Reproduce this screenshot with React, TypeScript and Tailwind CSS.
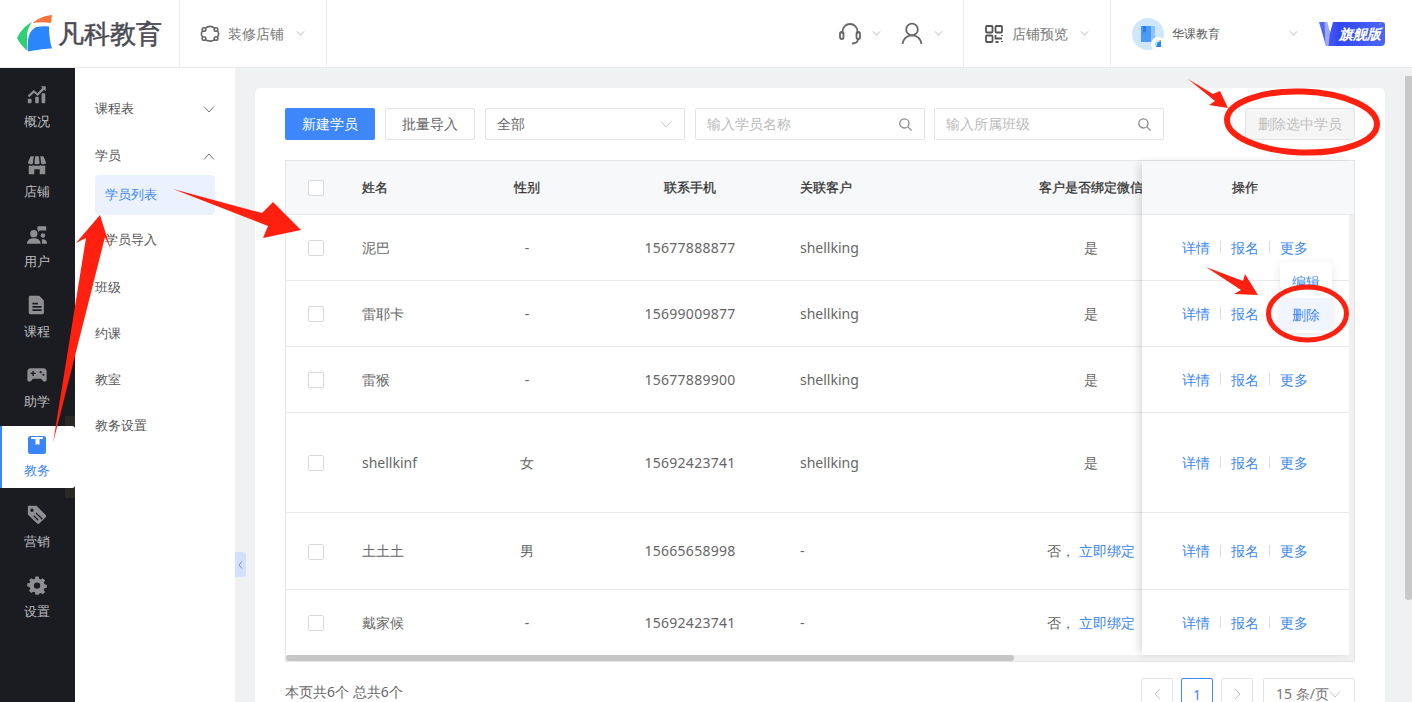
import React from "react";

const Chev = ({ className = "", up = false, small = false }: { className?: string; up?: boolean; small?: boolean }) => (
  <svg viewBox="0 0 12 7" className={`${small ? "h-[5px] w-[9px]" : "h-[7px] w-[12px]"} shrink-0 ${className}`} fill="none" stroke="currentColor" strokeWidth={small ? 1.3 : 1}>
    <path d={up ? "M1 6.5 6 1l5 5.5" : "M1 .5 6 6l5-5.5"} />
  </svg>
);

const Search = () => (
  <svg viewBox="0 0 16 16" className="h-[15px] w-[15px] text-[#8a8a8a]" fill="none" stroke="currentColor" strokeWidth="1.4">
    <circle cx="6.8" cy="6.8" r="4.9" />
    <path d="m10.5 10.5 4 4" />
  </svg>
);

const nav: { label: string; icon: React.ReactNode }[] = [
  {
    label: "概况",
    icon: (
      <>
        <rect x="2" y="16" width="4" height="5" rx="1" />
        <rect x="10" y="14" width="4" height="7" rx="1" />
        <rect x="17" y="10" width="4" height="11" rx="1" />
        <path d="M2 12.5 8.5 6.5l4 3.500 5.500-6-2-1.500h5.500V8l-1.700-1.800L12.700 13l-4-3.400L3.500 14.500z" />
      </>
    ),
  },
  {
    label: "店铺",
    icon: (
      <>
        <path d="M5 2.500h3.500L7.500 10c-.3 1.500-5 1.500-5.500-.5zM10 2.500h4l.8 7.500c-.3 1.500-5.300 1.500-5.600 0zM15.500 2.500H19l3 7c-.5 2-5.200 2-5.500.5z" />
        <path d="M3 12.500c1.500.5 3.500.5 4.700-.3 1.300 1 7.300 1 8.600 0 1.200.8 3.200.8 4.700.3V22h-6v-5.500H9V22H3z" />
      </>
    ),
  },
  {
    label: "用户",
    icon: (
      <>
        <circle cx="8.500" cy="10.500" r="4" />
        <path d="M1 21.500c0-4 3.500-6 7.500-6s7.500 2 7.500 6z" />
        <path d="M12.500 2.500h9.500V7h-7l-1.500 2V7h-1z" />
        <circle cx="18.500" cy="12.500" r="2.500" />
        <path d="M17.500 21.500H23c0-3-1.800-5-4.500-5l-1.500.5c.5 1.300.5 3 .5 4.500z" />
      </>
    ),
  },
  {
    label: "课程",
    icon: (
      <path
        fillRule="evenodd"
        d="M4.500 2h10l5 5v13.500A1.500 1.500 0 0 1 18 22H4.500A1.500 1.500 0 0 1 3 20.500v-17A1.500 1.500 0 0 1 4.500 2zM7 9.500v2h6v-2zm0 3.500v2h10v-2zm0 3.500v2h10v-2z"
      />
    ),
  },
  {
    label: "助学",
    icon: (
      <path
        fillRule="evenodd"
        d="M5 4.500h14c2 0 3.500 1.500 3.500 3.500v9c0 2.500-3 3-4.500 1l-1.500-2h-9L6 18c-1.500 2-4.500 1.500-4.500-1V8c0-2 1.500-3.500 3.500-3.500zM7 7.500v2H5V11h2v2h1.500v-2h2V9.500h-2v-2zm9 .2a1.200 1.200 0 1 0 0 2.400 1.200 1.200 0 0 0 0-2.400zm3 2.800a1.200 1.200 0 1 0 0 2.400 1.200 1.200 0 0 0 0-2.400z"
      />
    ),
  },
];

const nav2: { label: string; icon: React.ReactNode }[] = [
  {
    label: "营销",
    icon: (
      <path
        fillRule="evenodd"
        d="M3 2h8.500l10 10c.7.700.7 1.700 0 2.400l-7 7c-.7.700-1.700.7-2.400 0L2 11.500V3a1 1 0 0 1 1-1zm3.500 3a1.800 1.800 0 1 0 0 3.600 1.800 1.800 0 0 0 0-3.600zm4.800 4.200-1 1 7 7 1-1zm-2.500 3-1 1 5 5 1-1z"
      />
    ),
  },
  {
    label: "设置",
    icon: (
      <path
        fillRule="evenodd"
        d="M10 2h4l.6 3 2.100.9 2.600-1.700 2.800 2.800-1.700 2.600.9 2.100 3 .6v4l-3 .6-.9 2.100 1.700 2.600-2.800 2.800-2.600-1.700-2.100.9L14 25h-4l-.6-3-2.100-.9-2.600 1.700-2.800-2.800 1.700-2.600-.9-2.100-3-.6v-4l3-.6.9-2.100L1.900 7l2.800-2.800 2.600 1.700 2.100-.9zM12 9.500a4 4 0 1 0 0 8 4 4 0 0 0 0-8z"
        transform="translate(1.600 .9) scale(.87)"
      />
    ),
  },
];

const NavItem = ({ label, icon }: { label: string; icon: React.ReactNode }) => (
  <div className="flex h-[70px] flex-col items-center pr-px pt-[11px]">
    <svg viewBox="0 0 24 24" className="h-[22px] w-[22px] fill-[#8f8f91]">{icon}</svg>
    <div className="mt-[5px] text-[13px] leading-5 text-[#bdbdbf]">{label}</div>
  </div>
);

const subMenu = ["班级", "约课", "教室", "教务设置"];

const rows = [
  { h: "h-[66px]", name: "泥巴", g: "-", p: "15677888877", c: "shellking", b: true },
  { h: "h-[66px]", name: "雷耶卡", g: "-", p: "15699009877", c: "shellking", b: true, pop: true },
  { h: "h-[66px]", name: "雷猴", g: "-", p: "15677889900", c: "shellking", b: true },
  { h: "h-[100px]", name: "shellkinf", g: "女", p: "15692423741", c: "shellking", b: true },
  { h: "h-[77px]", name: "土土土", g: "男", p: "15665658998", c: "-", b: false },
  { h: "h-[65px]", name: "戴家候", g: "-", p: "15692423741", c: "-", b: false },
];

const Check = () => <span className="block h-4 w-4 rounded-[2px] border border-[#d9d9dd] bg-white" />;

const grid = "grid w-[896px] grid-cols-[62px_122px_114px_212px_204px_182px] items-center";
const headStrong = "text-[13px] font-medium text-[#333] [-webkit-text-stroke:0.3px_#333]";
const A = ({ children }: { children: React.ReactNode }) => <span className="text-[#3d87f5]">{children}</span>;

export default function App() {
  return (
    <div className="relative h-[702px] w-[1412px] overflow-hidden bg-[#f0f1f3] text-[14px] text-[#666] [font-family:'Noto_Sans_CJK_SC','Liberation_Sans',sans-serif]">
      {/* top bar */}
      <header className="flex h-[68px] items-center border-b border-[#ececee] bg-white">
        <div className="flex h-full w-[180px] items-center border-r border-[#ececee] pl-[17px]">
          <svg viewBox="0 0 36 37" className="h-[37px] w-9 shrink-0">
            <path d="M0 23C4 15 9 10 15 7c-4 6-5 10-5 15 0 5 0 10 .5 14C5 31 2 27 0 23z" fill="#2fcf73" />
            <path d="M16 8c4-4 10-7 19-8l-1 8c-7-1-12-1-18 0z" fill="#f9743a" />
            <path d="M19 12c5-1 9-1 13-.5 0 8 1 16 3 22-6 0-13 1-24 3-.5-5-.5-9 .5-14 1-4 3-8 7.500-10.500z" fill="#2b86fb" />
          </svg>
          <span className="ml-[5px] whitespace-nowrap text-[25.500px] font-medium leading-none text-[#4b4b54] [-webkit-text-stroke:0.5px_#4b4b54]">凡科教育</span>
        </div>
        <div className="flex h-full w-[147px] items-center border-r border-[#ececee] pl-5 text-[#777]">
          <svg viewBox="0 0 20 20" className="h-5 w-5 text-[#666]" fill="none" stroke="currentColor" strokeWidth="1.600">
            <path d="M5 4.500c3-2.500 7-2.500 10 0M17.500 7c1.500 2 1.500 4 0 6M15 15.500c-3 2-7 2-10 0M2.500 13c-1.500-2-1.500-4 0-6" />
            <circle cx="4" cy="5.500" r="1.800" />
            <circle cx="16" cy="5.500" r="1.800" />
            <circle cx="4" cy="14.500" r="1.800" />
            <circle cx="16" cy="14.500" r="1.800" />
          </svg>
          <span className="ml-2 whitespace-nowrap">装修店铺</span>
          <Chev small className="ml-3 text-[#b5b5b5]" />
        </div>
        <div className="flex-1" />
        <div className="flex h-full items-center border-r border-[#ececee] pr-[20px]">
          <svg viewBox="0 0 22 24" className="h-6 w-[22px] text-[#666]" fill="none" stroke="currentColor" strokeWidth="1.800">
            <path d="M3.500 12V9.500a7.500 7.500 0 0 1 15 0V12" />
            <rect x="1" y="10" width="3.500" height="7" rx="1.700" />
            <rect x="17.500" y="10" width="3.500" height="7" rx="1.700" />
            <path d="M19 17c0 3-2.500 4.500-6 4.500" />
          </svg>
          <Chev small className="ml-[11px] text-[#b5b5b5]" />
          <svg viewBox="0 0 22 24" className="ml-[20px] h-6 w-[22px] text-[#666]" fill="none" stroke="currentColor" strokeWidth="1.800">
            <circle cx="11" cy="7.500" r="5.800" />
            <path d="M1.500 22c.5-5 4.500-8.700 9.500-8.700s9 3.700 9.500 8.700" />
          </svg>
          <Chev small className="ml-[11px] text-[#b5b5b5]" />
        </div>
        <div className="flex h-full items-center border-r border-[#ececee] pl-[21px] pr-[21px] text-[#777]">
          <svg viewBox="0 0 18 18" className="h-[18px] w-[18px] text-[#555]" fill="none" stroke="currentColor" strokeWidth="1.800">
            <rect x="1" y="1" width="6.500" height="6.500" rx="1" />
            <rect x="10.500" y="1" width="6.500" height="6.500" rx="1" />
            <rect x="1" y="10.500" width="6.500" height="6.500" rx="1" />
            <path d="M10.500 10v3.500h6.500M10.500 17h3M17 10v1M17 16v1" />
          </svg>
          <span className="ml-[9px] whitespace-nowrap">店铺预览</span>
          <Chev small className="ml-3 text-[#b5b5b5]" />
        </div>
        <div className="flex h-full w-[301px] items-center pl-[21px]">
          <div className="relative flex h-8 w-8 shrink-0 items-center justify-center rounded-full bg-[#cfe6fb]">
            <svg viewBox="0 0 16 18" className="h-[18px] w-4">
              <path d="M1 1h10v16H1z" fill="#4a9bf5" />
              <path d="M11 1h4v16h-4z" fill="#8dc2fa" />
              <path d="M3 1h3v7L4.500 6.500 3 8z" fill="#2b7be8" />
            </svg>
            <span className="absolute -bottom-px -right-px flex h-[14px] w-[14px] items-center justify-center rounded-full bg-white">
              <svg viewBox="0 0 8 8" className="h-2 w-2">
                <path d="M2 7 3.500 2 7 1v6z" fill="#2b86fb" />
                <path d="M1 6 3 2 1.500 3z" fill="#2fcf73" />
                <path d="M4 1 7 0v1z" fill="#f9743a" />
              </svg>
            </span>
          </div>
          <span className="ml-2 whitespace-nowrap text-[12px] text-[#555]">华课教育</span>
          <Chev small className="ml-[69px] text-[#b5b5b5]" />
          <div className="relative ml-[21px] flex h-[24px] w-[66px] items-center justify-end pr-[4px]">
            <svg viewBox="0 0 66 24" className="absolute inset-0 h-full w-full">
              <defs>
                <linearGradient id="badge" x1="0" x2="1" y1="0" y2="0">
                  <stop offset="0" stopColor="#5a6cf8" />
                  <stop offset="0.3" stopColor="#3347f0" />
                  <stop offset="1" stopColor="#4a66f8" />
                </linearGradient>
              </defs>
              <path d="M0 0h8l3 11 3-11h49a3 3 0 0 1 3 3v17a4 4 0 0 1-4 4H7z" fill="url(#badge)" />
              <path d="M5.500 0h3l2.500 10 -1.500 14h-3z" fill="#b9c2fd" opacity="0.75" />
              <path d="M60 3l2-2M63 7l2-2" stroke="#8ba243" strokeWidth="1" />
            </svg>
            <span className="relative whitespace-nowrap text-[14px] font-bold italic leading-none text-white">旗舰版</span>
          </div>
        </div>
      </header>

      <div className="flex h-[634px]">
        {/* dark rail */}
        <aside className="w-[75px] shrink-0 bg-[#1b1c22] pt-[5px]">
          {nav.map((n) => (
            <NavItem key={n.label} {...n} />
          ))}
          <div className="relative mb-[5px] mt-[3px] h-[62px]">
            <span className="absolute -bottom-[10px] -top-[10px] right-0 w-[10px] bg-[#2a2925]" />
            <div className="relative flex h-full flex-col items-center rounded-r-[3px] border-l-2 border-[#3d87f5] bg-white pr-[3px] pt-[10px]">
              <svg viewBox="0 0 18 18" className="h-[18px] w-[18px]">
                <rect width="18" height="18" rx="2.500" fill="#3a85fb" />
                <path d="M3 0h12v2H11.500v6L9.500 7 7.500 8V2H3z" fill="#fff" transform="translate(0 1)" />
              </svg>
              <div className="mt-[6px] text-[13px] leading-5 text-[#3d87f5]">教务</div>
            </div>
          </div>
          {nav2.map((n) => (
            <NavItem key={n.label} {...n} />
          ))}
        </aside>

        {/* sub menu */}
        <nav className="relative w-[160px] shrink-0 bg-white pl-5 pr-5 text-[13px] text-[#555]">
          <div className="flex h-[46px] items-center justify-between pt-[36px]">
            <span>课程表</span>
            <Chev className="text-[#777]" />
          </div>
          <div className="mt-[19px] flex h-[46px] items-center justify-between">
            <span>学员</span>
            <Chev up className="text-[#777]" />
          </div>
          <div className="-mt-[4px] flex h-10 w-[120px] items-center rounded-[4px] bg-[#ebf2fe] pl-[10px] text-[#3d87f5]">学员列表</div>
          <div className="flex h-[50px] items-center pl-[10px]">学员导入</div>
          {subMenu.map((s) => (
            <div key={s} className="flex h-[46px] items-center first:-mt-[3px]">{s}</div>
          ))}
          <button className="absolute -right-[11px] top-[484px] z-10 flex h-[25px] w-[11px] items-center justify-center rounded-r-[3px] bg-[#d3e0fb]">
            <svg viewBox="0 0 5 8" className="h-2 w-[5px] text-[#6f8fe0]" fill="none" stroke="currentColor"><path d="M4 .5 1 4l3 3.500" /></svg>
          </button>
        </nav>

        {/* main */}
        <main className="flex-1 overflow-hidden pl-5 pt-5">
          <div className="h-[700px] w-[1130px] rounded-t-[6px] bg-white px-[30px] pt-5">
            <div className="flex h-8 items-center">
              <button className="h-8 w-[90px] rounded-[2px] bg-[#3d87fb] pb-[2px] text-white">新建学员</button>
              <button className="ml-[10px] h-8 w-[90px] rounded-[2px] border border-[#e2e3e7] pb-[2px] text-[#666]">批量导入</button>
              <div className="ml-[10px] flex h-8 w-[200px] items-center justify-between rounded-[2px] border border-[#e2e3e7] pl-[11px] pr-3">
                <span className="-mt-[2px]">全部</span>
                <Chev className="text-[#c4c4c4]" />
              </div>
              <div className="ml-[10px] flex h-8 w-[230px] items-center justify-between rounded-[2px] border border-[#e2e3e7] pl-[11px] pr-[11px] text-[#bbb]">
                <span className="-mt-[2px]">输入学员名称</span>
                <Search />
              </div>
              <div className="ml-[9px] flex h-8 w-[230px] items-center justify-between rounded-[2px] border border-[#e2e3e7] pl-[11px] pr-[11px] text-[#bbb]">
                <span className="-mt-[2px]">输入所属班级</span>
                <Search />
              </div>
              <button className="ml-[81px] h-8 w-[110px] rounded-[2px] border border-[#e2e3e7] bg-[#f5f5f5] pb-[2px] text-[#c0c0c0]">删除选中学员</button>
            </div>

            {/* table */}
            <div className="mt-5 w-[1070px] border border-[#e4e6ea]">
              <div className="flex">
                <div className="w-[856px] overflow-hidden">
                  <div className={`${grid} h-[54px] border-b border-[#e8e9ec] bg-[#f7f8fa] ${headStrong}`}>
                    <div className="flex justify-center pr-[2px]"><Check /></div>
                    <div className="pl-[14px]">姓名</div>
                    <div className="text-center">性别</div>
                    <div className="text-center">联系手机</div>
                    <div className="pl-1">关联客户</div>
                    <div className="whitespace-nowrap text-center">客户是否绑定微信</div>
                  </div>
                  {rows.map((r, i) => (
                    <div key={i} className={`${grid} ${r.h} ${i < 5 ? "border-b border-[#e8e8e8]" : ""} pb-px text-[#666]`}>
                      <div className="flex justify-center pr-[2px] pt-[2px]"><Check /></div>
                      <div className="pl-[14px]">{r.name}</div>
                      <div className="text-center">{r.g}</div>
                      <div className="text-center tracking-[0.25px]">{r.p}</div>
                      <div className="pl-1">{r.c}</div>
                      <div className="whitespace-nowrap text-center">
                        {r.b ? "是" : (<>否， <A>立即绑定</A></>)}
                      </div>
                    </div>
                  ))}
                </div>
                <div className="relative z-10 w-[212px] shrink-0 bg-white shadow-[-5px_0_8px_-2px_rgba(0,0,0,0.14)]">
                  <div className={`flex h-[54px] items-center justify-center border-b border-[#e8e9ec] bg-[#f7f8fa] pr-[6px] ${headStrong}`}>操作</div>
                  <div className="flex">
                    <div className="w-[207px]">
                      {rows.map((r, i) => (
                        <div key={i} className={`relative flex items-center pb-px pl-[40px] ${r.h} ${i < 5 ? "border-b border-[#e8e8e8]" : ""}`}>
                          <A>详情</A>
                          <span className="mx-[10px] h-3 w-px bg-[#ddd]" />
                          <A>报名</A>
                          {!r.pop && (
                            <>
                              <span className="mx-[10px] h-3 w-px bg-[#ddd]" />
                              <A>更多</A>
                            </>
                          )}
                          {r.pop && (
                            <div className="absolute left-[138px] top-[-19px] z-20 h-[71px] w-[52px] rounded-[3px] bg-white pt-[2px] shadow-[0_2px_10px_rgba(0,0,0,0.1)]">
                              <div className="flex h-[34px] items-center justify-center"><A>编辑</A></div>
                              <div className="flex h-8 items-center justify-center bg-[#f0f5ff]"><A>删除</A></div>
                            </div>
                          )}
                        </div>
                      ))}
                    </div>
                    <div className="w-[5px] bg-[#f0f0f0]" />
                  </div>
                </div>
              </div>
              <div className="h-[6px] bg-[#f0f0f0]">
                <div className="h-full w-[728px] rounded-[3px] bg-[#c6c6c6]" />
              </div>
            </div>

            {/* pagination */}
            <div className="mt-4 flex items-start justify-between">
              <span className="pt-[4px] text-[14px] leading-5 text-[#666]">本页共6个 总共6个</span>
              <div className="flex">
                <span className="flex h-8 w-8 items-center justify-center rounded-[2px] border border-[#e2e3e7] text-[#c4c4c4]">
                  <svg viewBox="0 0 7 12" className="h-3 w-[7px]" fill="none" stroke="currentColor"><path d="M6 1 1 6l5 5" /></svg>
                </span>
                <span className="ml-2 flex h-8 w-8 items-center justify-center rounded-[2px] border border-[#3d87fb] text-[#3d87fb]">1</span>
                <span className="ml-2 flex h-8 w-8 items-center justify-center rounded-[2px] border border-[#e2e3e7] text-[#c4c4c4]">
                  <svg viewBox="0 0 7 12" className="h-3 w-[7px]" fill="none" stroke="currentColor"><path d="m1 1 5 5-5 5" /></svg>
                </span>
                <span className="ml-[10px] flex h-8 w-[92px] items-center rounded-[2px] border border-[#e2e3e7] pl-3 text-[#777]">
                  <span className="-mt-[2px] whitespace-nowrap">15 条/页</span>
                  <Chev className="text-[#c4c4c4]" />
                </span>
              </div>
            </div>
          </div>
        </main>

        <div className="w-[7px] shrink-0" />
      </div>

      {/* page scrollbar */}
      <div className="absolute bottom-0 right-0 top-[68px] w-[7px] bg-[#f1f1f1]">
        <div className="mt-[8px] h-[524px] rounded-b-[3px] bg-[#c8c8c8]" />
      </div>

      {/* red annotations */}
      <svg className="pointer-events-none absolute left-0 top-0 z-30 h-[702px] w-[1412px]" viewBox="0 0 1412 702">
        <g fill="#ff2010">
          <polygon points="1188,79 1213,94 1220,91 1228,108 1209,105 1215,101" />
          <polygon points="173,189 262,213 273,202 301,230 263,238 268,226" />
          <polygon points="53,443 86,238 76,243 100,215 111,250 105,237" />
          <polygon points="1206,267 1243,281 1245,274 1258,295 1234,294 1241,290" />
        </g>
        <g fill="none" stroke="#ff2010">
          <ellipse cx="1302" cy="122" rx="75" ry="30.500" strokeWidth="6" transform="rotate(2 1302 122)" />
          <ellipse cx="1307.500" cy="313.500" rx="39" ry="26.500" strokeWidth="5" />
        </g>
      </svg>
    </div>
  );
}
